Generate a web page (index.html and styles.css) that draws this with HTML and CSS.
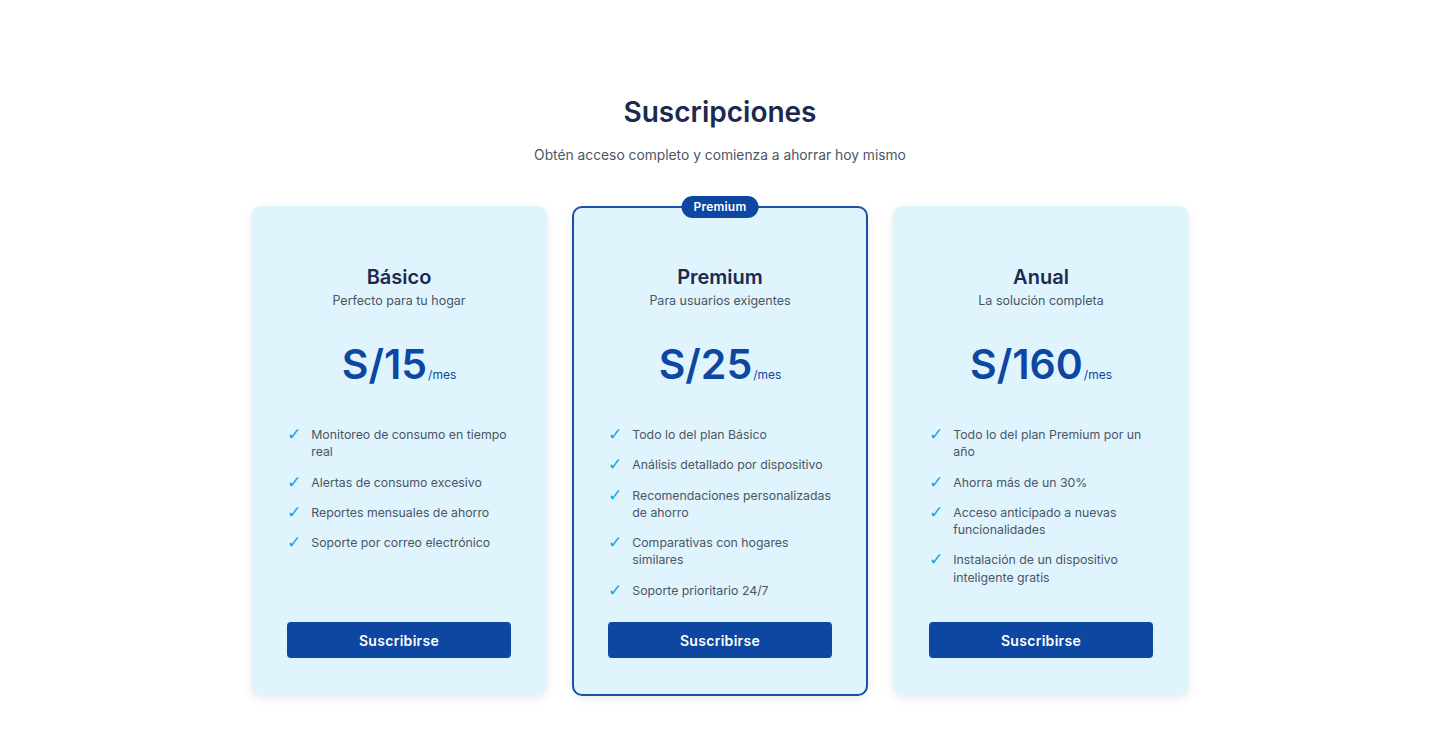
FILE: index.html
```html
<!DOCTYPE html>
<html lang="es">
<head>
<meta charset="utf-8">
<title>Suscripciones</title>
<link rel="stylesheet" href="styles.css">
</head>
<body>
<section class="pricing">
  <h2 class="pricing-title">Suscripciones</h2>
  <p class="pricing-sub">Obtén acceso completo y comienza a ahorrar hoy mismo</p>
  <div class="plans">
    <div class="plan">
      <div class="plan-head">
        <h3 class="plan-name">Básico</h3>
        <p class="plan-desc">Perfecto para tu hogar</p>
      </div>
      <div class="plan-price"><span class="amount">S/15</span><span class="period">/mes</span></div>
      <ul class="features">
        <li><span class="check">✓</span><span>Monitoreo de consumo en tiempo real</span></li>
        <li><span class="check">✓</span><span>Alertas de consumo excesivo</span></li>
        <li><span class="check">✓</span><span>Reportes mensuales de ahorro</span></li>
        <li><span class="check">✓</span><span>Soporte por correo electrónico</span></li>
      </ul>
      <button class="btn">Suscribirse</button>
    </div>
    <div class="plan plan-featured">
      <span class="badge">Premium</span>
      <div class="plan-head">
        <h3 class="plan-name">Premium</h3>
        <p class="plan-desc">Para usuarios exigentes</p>
      </div>
      <div class="plan-price"><span class="amount">S/25</span><span class="period">/mes</span></div>
      <ul class="features">
        <li><span class="check">✓</span><span>Todo lo del plan Básico</span></li>
        <li><span class="check">✓</span><span>Análisis detallado por dispositivo</span></li>
        <li><span class="check">✓</span><span>Recomendaciones personalizadas de ahorro</span></li>
        <li><span class="check">✓</span><span>Comparativas con hogares similares</span></li>
        <li><span class="check">✓</span><span>Soporte prioritario 24/7</span></li>
      </ul>
      <button class="btn">Suscribirse</button>
    </div>
    <div class="plan">
      <div class="plan-head">
        <h3 class="plan-name">Anual</h3>
        <p class="plan-desc">La solución completa</p>
      </div>
      <div class="plan-price"><span class="amount">S/160</span><span class="period">/mes</span></div>
      <ul class="features">
        <li><span class="check">✓</span><span>Todo lo del plan Premium por un año</span></li>
        <li><span class="check">✓</span><span>Ahorra más de un 30%</span></li>
        <li><span class="check">✓</span><span>Acceso anticipado a nuevas funcionalidades</span></li>
        <li><span class="check">✓</span><span>Instalación de un dispositivo inteligente gratis</span></li>
      </ul>
      <button class="btn">Suscribirse</button>
    </div>
  </div>
</section>
</body>
</html>
```
FILE: styles.css
```css
* { box-sizing: border-box; }
html, body { margin: 0; padding: 0; background: #ffffff; }
body { font-family: Inter, "Noto Sans", sans-serif; color: #1b2a4e; }

.pricing {
  padding: 94px 0 40px;
  display: flex;
  flex-direction: column;
  align-items: center;
}
.pricing-title {
  margin: 0;
  font-size: 28px;
  line-height: 36px;
  font-weight: 600;
  color: #1b2a4e;
}
.pricing-sub {
  margin: 16px 0 0;
  font-size: 13.8px;
  line-height: 18px;
  color: #4b5563;
}
.plans {
  margin-top: 42px;
  display: grid;
  grid-template-columns: repeat(3, 296px);
  gap: 25px;
}
.plan {
  position: relative;
  background: #e0f4fd;
  border-radius: 10px;
  box-shadow: 0 3px 10px rgba(15, 30, 60, 0.08);
  padding: 56px 35px 37px;
  display: flex;
  flex-direction: column;
  border: 1px solid transparent;
}
.plan-featured {
  border: 2px solid #1a4fa8;
  padding: 55px 34px 36px;
}
.badge {
  position: absolute;
  top: -12px;
  left: 50%;
  transform: translateX(-50%);
  background: #0d47a1;
  color: #fff;
  font-size: 12px;
  font-weight: 600;
  line-height: 22px;
  padding: 0 12px;
  border-radius: 11px;
  letter-spacing: 0.2px;
}
.plan-head { text-align: center; }
.plan-name {
  margin: 0;
  font-size: 20px;
  line-height: 28px;
  font-weight: 600;
  color: #1b2a4e;
}
.plan-desc {
  margin: 2px 0 0;
  font-size: 12.5px;
  line-height: 16px;
  color: #4b5563;
}
.plan-price {
  margin-top: 30px;
  display: flex;
  justify-content: center;
  align-items: baseline;
  color: #0d47a1;
}
.amount {
  font-size: 41px;
  line-height: 50px;
  font-weight: 600;
}
.period {
  font-size: 12px;
  font-weight: 400;
  margin-left: 1px;
}
.features {
  list-style: none;
  margin: 37px 0 23px;
  padding: 0;
  display: flex;
  flex-direction: column;
  gap: 13px;
}
.features li {
  display: flex;
  align-items: flex-start;
  gap: 10px;
  font-size: 12.3px;
  line-height: 17.3px;
  color: #4b5563;
}
.check {
  flex: 0 0 13px;
  color: #0ea5e9;
  font-size: 17px;
  line-height: 17px;
  font-family: "DejaVu Sans", sans-serif;
}
.btn {
  margin-top: auto;
  align-self: stretch;
  height: 36px;
  border: none;
  border-radius: 4px;
  background: #0d47a1;
  color: #ffffff;
  font-family: Inter, "Noto Sans", sans-serif;
  font-size: 14px;
  font-weight: 600;
  letter-spacing: 0.3px;
}
```
